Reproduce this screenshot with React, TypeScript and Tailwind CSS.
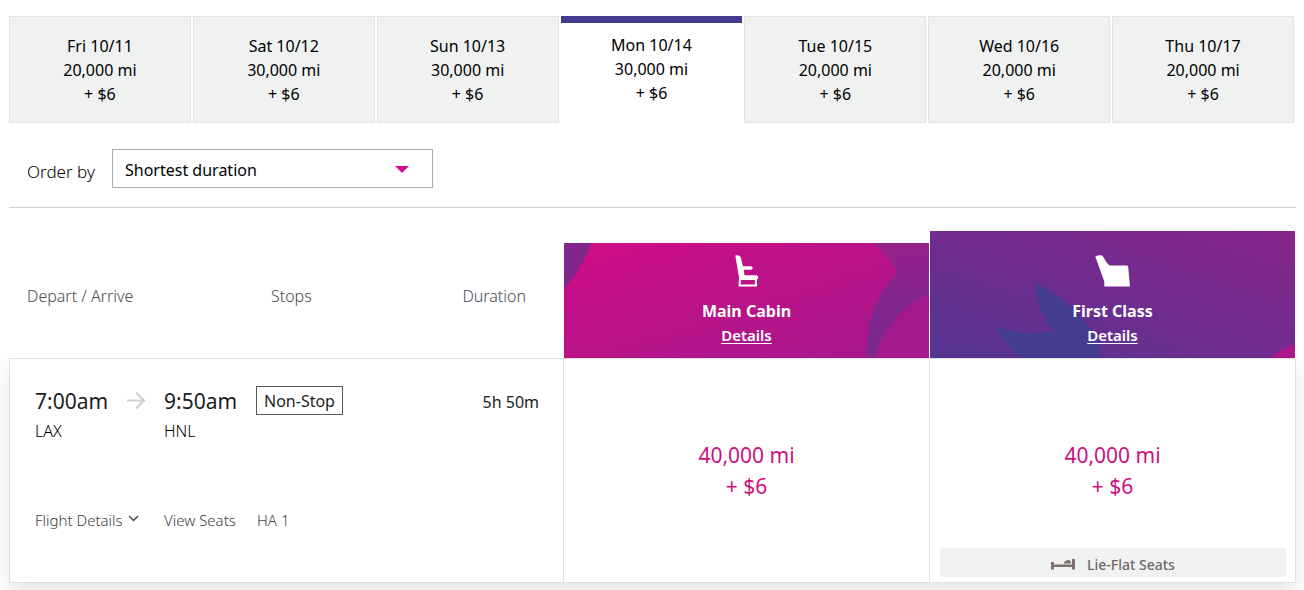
import { ReactNode } from "react";

const days = [
  { day: "Fri 10/11", miles: "20,000 mi" },
  { day: "Sat 10/12", miles: "30,000 mi" },
  { day: "Sun 10/13", miles: "30,000 mi" },
  { day: "Mon 10/14", miles: "30,000 mi", selected: true },
  { day: "Tue 10/15", miles: "20,000 mi" },
  { day: "Wed 10/16", miles: "20,000 mi" },
  { day: "Thu 10/17", miles: "20,000 mi" },
];

function DayTabs() {
  return (
    <div role="tablist" aria-label="Departure date" className="mr-[2px] grid grid-cols-7 gap-[2px]">
      {days.map((d) => (
        <button
          key={d.day}
          type="button"
          role="tab"
          aria-selected={!!d.selected}
          className={
            d.selected
              ? "h-[107px] border-t-[7px] border-[#443a90] bg-white pb-2 text-base leading-6"
              : "h-[107px] border border-[#e0e3e2] bg-[#f0f2f2] text-base leading-6"
          }
        >
          <span className="block">{d.day}</span>
          <span className="block">{d.miles}</span>
          <span className="block">+ $6</span>
        </button>
      ))}
    </div>
  );
}

function MainCabinArt() {
  return (
    <svg className="absolute inset-0 h-full w-full" viewBox="0 0 365 115" preserveAspectRatio="none" aria-hidden="true">
      <defs>
        <linearGradient id="mainPink" x1="0" y1="0" x2="1" y2="1">
          <stop offset="0" stopColor="#cf0d86" />
          <stop offset="0.5" stopColor="#b91389" />
          <stop offset="1" stopColor="#a2198a" />
        </linearGradient>
        <linearGradient id="mainPurple" x1="0" y1="0" x2="0" y2="1">
          <stop offset="0" stopColor="#97218b" />
          <stop offset="0.5" stopColor="#82268c" />
          <stop offset="1" stopColor="#7c288d" />
        </linearGradient>
      </defs>
      <rect width="365" height="115" fill="url(#mainPink)" />
      <path d="M0 0H27Q19 24 0 46Z" fill="#83268c" />
      <path d="M307 0Q323 9 333 30Q300 63 303 115H365V0Z" fill="url(#mainPurple)" />
      <path d="M365 51Q325 67 310 115H365Z" fill="#a31a8a" />
    </svg>
  );
}

function FirstClassArt() {
  return (
    <svg className="absolute inset-0 h-full w-full" viewBox="0 0 365 127" preserveAspectRatio="none" aria-hidden="true">
      <defs>
        <linearGradient id="firstPurple" gradientUnits="userSpaceOnUse" x1="230" y1="-50" x2="150" y2="190">
          <stop offset="0" stopColor="#88258a" />
          <stop offset="0.5" stopColor="#6f2c8e" />
          <stop offset="1" stopColor="#50378f" />
        </linearGradient>
      </defs>
      <rect width="365" height="127" fill="url(#firstPurple)" />
      <path
        d="M105 52Q145 70 170 111L168 127H92Q77 116 65 96Q95 106 124 100Q106 79 105 52Z"
        fill="#443c90"
      />
      <path d="M340 127Q349 118 365 113V127Z" fill="#a91889" />
    </svg>
  );
}

function MainSeatIcon() {
  return (
    <svg width="24" height="32" viewBox="0 0 24 32" fill="#fff" aria-hidden="true">
      <path
        fillRule="evenodd"
        d="M.3 .6C3.500-.4 5.700 1 6.300 4L7.800 11.300H15.500C18.300 11.300 18.300 14.800 15.500 14.800H8.700L9.500 20.200H21C24 20.200 23.500 24 22 24.300L22 31.500H3.500L4 22.500ZM5.800 25V29.500H19.900V25Z"
      />
    </svg>
  );
}

function FirstSeatIcon() {
  return (
    <svg width="36" height="32" viewBox="0 0 36 32" fill="#fff" aria-hidden="true">
      <path d="M.3 1.500Q3.500-.2 7 .5Q8 1 9 3Q12 9 14.800 10.500H32Q33 10.500 33.200 12L35 31.500H9.300V26.500Z" />
    </svg>
  );
}

function BedIcon() {
  return (
    <svg width="24" height="11" viewBox="0 0 24 11" fill="#7d706d" aria-hidden="true">
      <path d="M0 3h3v2.500h18V0h3v10.500h-3V8H3v2.500H0Z" />
      <path d="M13 4.500V3.500Q14 1 18 1Q19.800 1 20 3.500V4.500Z" />
    </svg>
  );
}

function CabinHeader({ name, art, icon, tall }: { name: string; art: ReactNode; icon: ReactNode; tall?: boolean }) {
  return (
    <th scope="col" className="p-0 pl-px align-bottom font-normal">
      <div
        className={
          tall
            ? "relative mr-px flex h-[127px] flex-col items-center pt-6 text-white"
            : "relative flex h-[115px] flex-col items-center pt-3 text-white"
        }
      >
        {art}
        <div className="relative flex h-8 items-center">{icon}</div>
        <div className="relative mt-3 text-base leading-6 font-bold">{name}</div>
        <a href="#details" className="relative text-[15px] leading-6 font-semibold underline underline-offset-2">
          Details
        </a>
      </div>
    </th>
  );
}

export default function App() {
  return (
    <main className="overflow-hidden bg-white pt-4 pr-2 pb-2 pl-[9px] font-['Noto_Sans',sans-serif] text-black">
      <DayTabs />

      <div className="mt-[26px] flex items-center border-b border-[#cfcfcf] pb-[19px] pl-[18px]">
        <label htmlFor="order" className="w-[85px] pt-[6px] text-[17px] leading-6 font-light">
          Order by
        </label>
        <div className="relative">
          <select
            id="order"
            className="h-[39px] w-[321px] appearance-none border border-[#adadad] bg-white pt-[2px] pr-10 pl-3 text-base"
            defaultValue="duration"
          >
            <option value="duration">Shortest duration</option>
          </select>
          <svg
            className="pointer-events-none absolute top-[17px] right-6"
            width="14"
            height="7"
            viewBox="0 0 14 7"
            aria-hidden="true"
          >
            <path d="M0 0H14L7 7Z" fill="#d0108a" />
          </svg>
        </div>
      </div>

      <table className="mt-[23px] w-full table-fixed border-separate border-spacing-0">
        <colgroup>
          <col className="w-[247px]" />
          <col className="w-[178px]" />
          <col className="w-[129px]" />
          <col className="w-[366px]" />
          <col className="w-[367px]" />
        </colgroup>
        <thead className="relative z-10 bg-white">
          <tr className="text-base text-[#4a4b4f]">
            <th scope="col" className="p-0 pt-[2px] pl-[18px] text-left font-light">
              Depart / Arrive
            </th>
            <th scope="col" className="p-0 pt-[2px] pl-[15px] text-left font-light">
              Stops
            </th>
            <th scope="col" className="p-0 pt-[2px] pr-[37px] text-right font-light">
              Duration
            </th>
            <CabinHeader name="Main Cabin" art={<MainCabinArt />} icon={<MainSeatIcon />} />
            <CabinHeader name="First Class" art={<FirstClassArt />} icon={<FirstSeatIcon />} tall />
          </tr>
        </thead>
        <tbody className="shadow-[0_10px_20px_rgba(0,0,0,0.1)]">
          <tr className="h-[140px] align-top">
            <td className="border-t border-l border-[#e0e0e0] p-0 pt-[26px] pl-[25px]">
              <div className="flex">
                <div className="w-[92px]">
                  <div className="text-[21px] leading-8 text-[#1c1c1c]">7:00am</div>
                  <div className="text-base leading-7 font-light">LAX</div>
                </div>
                <svg className="mt-[6px] mr-[18px]" width="19" height="19" viewBox="0 0 19 19" fill="none" aria-label="to">
                  <path d="M0 9.500H17M9 1.500L17 9.500L9 17.500" stroke="#d0d0d0" strokeWidth="2.200" />
                </svg>
                <div>
                  <div className="text-[21px] leading-8 text-[#1c1c1c]">9:50am</div>
                  <div className="text-base leading-7 font-light">HNL</div>
                </div>
              </div>
            </td>
            <td className="border-t border-[#e0e0e0] p-0 pt-[27px]">
              <span className="inline-block border border-[#58595b] px-[7px] pt-px text-base leading-[26px] text-[#1c1c1c]">
                Non-Stop
              </span>
            </td>
            <td className="border-t border-[#e0e0e0] p-0 pt-[31px] pr-6 text-right text-base leading-6 text-[#1c1c1c]">
              5h 50m
            </td>
            <td
              rowSpan={2}
              className="border-y border-l border-[#e0e0e0] p-0 text-center align-middle text-[21px] leading-[31px] text-[#cb1080]"
            >
              <div>40,000 mi</div>
              <div>+ $6</div>
            </td>
            <td
              rowSpan={2}
              className="relative border border-[#e0e0e0] border-l-[#c8c8c8] p-0 text-center align-middle text-[21px] leading-[31px] text-[#cb1080] [border-left-style:dotted]"
            >
              <div>40,000 mi</div>
              <div>+ $6</div>
              <div className="absolute right-[9px] bottom-[5px] left-[10px] flex h-[29px] items-center justify-center gap-3 rounded-[3px] bg-[#f0f2f2] pt-1 text-sm leading-6 font-medium text-[#6f6867]">
                <BedIcon />
                Lie-Flat Seats
              </div>
            </td>
          </tr>
          <tr className="h-[85px] align-top text-[15px] leading-6 font-light text-[#3f4043]">
            <td className="border-b border-l border-[#e0e0e0] p-0 pt-[10px] pl-[25px]">
              <div className="flex">
                <button type="button" className="flex w-[129px] items-center gap-[5px]">
                  Flight Details
                  <svg className="mb-1" width="11" height="7" viewBox="0 0 11 7" fill="none" aria-hidden="true">
                    <path d="M1 1L5.500 5.500L10 1" stroke="#4c4d50" strokeWidth="1.500" />
                  </svg>
                </button>
                <button type="button">View Seats</button>
              </div>
            </td>
            <td className="border-b border-[#e0e0e0] p-0 pt-[10px] pl-px">HA 1</td>
            <td className="border-b border-[#e0e0e0] p-0" />
          </tr>
        </tbody>
      </table>
    </main>
  );
}
